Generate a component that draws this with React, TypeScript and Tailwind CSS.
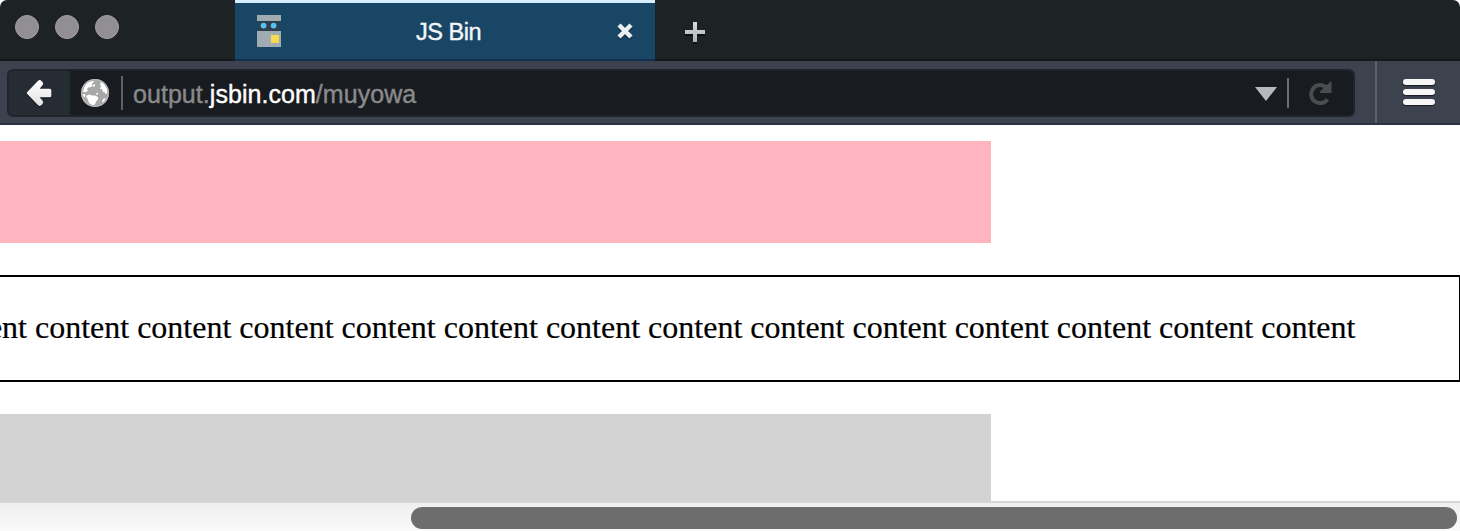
const lights = [0, 1, 2];

function RobotIcon() {
  return (
    <svg width="24" height="32" viewBox="0 0 24 32" className="shrink-0">
      <path fill="#a0abb2" d="M0 0h24v6H0zM0 16h24v16H0z" />
      <path fill="#2e3e4a" d="M2 6h20v10H2z" />
      <circle cx="6.6" cy="10.6" r="2.9" fill="#55c1f3" />
      <circle cx="16.6" cy="10.6" r="2.9" fill="#55c1f3" />
      <path fill="#f6dc4c" d="M14 20h8v8h-8z" />
    </svg>
  );
}

function TabStrip() {
  return (
    <div className="flex h-[61px] w-full bg-[#1d2225]">
      <div className="flex w-[235px] shrink-0 gap-4 border-b-2 border-[#15191c] pt-[15px] pl-[15px]">
        {lights.map((n) => (
          <span
            key={n}
            className="size-6 rounded-full border border-[#a29fa5] bg-[#918e94]"
          />
        ))}
      </div>
      <div className="flex w-[420px] shrink-0 border-t-[3px] border-b-2 border-[#15191c] border-t-[#d5effe] border-b-[#10304d] bg-[#1a4666] pt-3 pl-[22px]">
        <RobotIcon />
        <span className="ml-[135px] w-[200px] pt-px text-[23.5px] leading-8 tracking-[-0.45px] text-[#f3f6f9] [-webkit-text-stroke:0.4px]">
          JS Bin
        </span>
        <svg width="18" height="20" viewBox="0 0 18 20" className="mt-[7px] shrink-0">
          <path d="M3 5l12 12M15 5L3 17" stroke="#0b2942" strokeWidth="4.4" opacity=".6" />
          <path d="M3 3l12 12M15 3L3 15" stroke="#eceef0" strokeWidth="4.4" />
        </svg>
      </div>
      <div className="flex grow border-b-2 border-[#15191c] pt-[21px] pl-[29px]">
        <svg width="24" height="24" viewBox="0 0 24 24">
          <defs>
            <linearGradient id="plus" x1="0" y1="0" x2="0" y2="1">
              <stop stopColor="#d8dada" />
              <stop offset="1" stopColor="#b0b4b4" />
            </linearGradient>
          </defs>
          <path fill="#0e1113" d="M9 3h4v8h8v4h-8v8H9v-8H1v-4h8z" />
          <path fill="url(#plus)" d="M9 1h4v8h8v4h-8v8H9v-8H1V9h8z" />
        </svg>
      </div>
    </div>
  );
}

function Globe() {
  return (
    <svg width="28" height="28" viewBox="0 0 28 28" className="ml-[10px] shrink-0">
      <circle cx="14" cy="14" r="14" fill="#a8a8a8" />
      <path
        fill="#fff"
        d="M3 9l2-4 4-2.5 4-.5-1 2-2 1 2 1-2 2-3 .5-1 2 1 1.5-2 1-3 0zM12 6l2-1 0 2-2 1zM1.5 15l2 0 1 1.5-1 2-1-1zM5 17l3-1.5 3 1 3 0 3 1.5 0 2.5-2 2-1 3-3 .5-3-2-1-3zM20 3l3 2 3 5 .5 4-2 1-1-2-1.5 0-1-3-2 0 1-3-1-2zM15 14.5l2-1v1l-1 2zM22 20l3-1-2 3.5-2 1z"
      />
      <circle cx="14" cy="14" r="13.3" fill="none" stroke="#b8b8b8" strokeWidth="1.2" />
    </svg>
  );
}

function Toolbar() {
  return (
    <div className="flex h-16 w-full border-b-2 border-[#2c3440] bg-[#3c424e] pl-[7px]">
      <div className="mt-2 flex h-12 w-[1348px] shrink-0 items-center overflow-hidden rounded-md border-2 border-[#20252b] bg-[#181b1f]">
        <div className="flex h-full w-[62px] shrink-0 items-center border-r-2 border-[#20252b] bg-[#262c33] pl-[17px]">
          <svg width="28" height="32" viewBox="0 0 28 32">
            <defs>
              <linearGradient id="back" x1="0" y1="0" x2="0" y2="1">
                <stop stopColor="#fff" />
                <stop offset="1" stopColor="#e2e2e2" />
              </linearGradient>
              <path
                id="arrow"
                d="M1.3 17q-1-1 0-2L12.1 3.7q1.6-1.4 3.4.2l.9.9q1.6 1.8.2 3.4L13.6 11.8H23.8q1.5 0 1.5 1.5v5.4q0 1.5-1.5 1.5H13.6l3 3.6q1.4 1.6-.2 3.4l-.9.9q-1.8 1.6-3.4.2z"
              />
            </defs>
            <use href="#arrow" y="1.2" fill="#13171b" />
            <use href="#arrow" fill="url(#back)" />
          </svg>
        </div>
        <Globe />
        <span className="ml-3 h-[34px] w-0.5 shrink-0 bg-[#5d6168]" />
        <div className="ml-[10px] grow pt-px text-[25px] leading-8 tracking-[0.05px] text-[#898a8c] [-webkit-text-stroke:0.4px]">
          output.<span className="text-white">jsbin.com</span>/muyowa
        </div>
        <svg width="22" height="14" viewBox="0 0 22 14" className="mt-px shrink-0">
          <path fill="#b6babe" d="M0 0h22L11 14z" />
        </svg>
        <span className="ml-[10px] h-[30px] w-0.5 shrink-0 bg-[#6b6f74]" />
        <svg width="24" height="24" viewBox="0 0 24 24" className="mr-5 ml-5 shrink-0">
          <path d="M18.5 18.3A9 9 0 1 1 17 6.2" fill="none" stroke="#4b4c4e" strokeWidth="4" />
          <path fill="#4b4c4e" d="M22.5 0v12H11V10.500l5-5z" />
        </svg>
      </div>
      <span className="ml-5 h-[62px] w-0.5 shrink-0 bg-[#5b616b]" />
      <div className="mt-[18px] ml-[26px] flex flex-col gap-1">
        {lights.map((n) => (
          <span
            key={n}
            className="h-1.5 w-8 rounded-[3px] bg-[#f6f6f6] shadow-[0_1px_1px_#181c22]"
          />
        ))}
      </div>
    </div>
  );
}

export default function App() {
  return (
    <div className="h-[531px] w-full overflow-hidden bg-white font-['Liberation_Sans',Arial,sans-serif]">
      <div className="overflow-hidden rounded-tl-[7px] rounded-tr-[7px]">
        <TabStrip />
        <Toolbar />
      </div>
      <div className="flex h-[376px] flex-col pt-4">
        <div className="h-[102px] w-[991px] shrink-0 bg-[#ffb5c0]" />
        <div className="mt-8 flex h-[107px] w-[1461px] shrink-0 justify-end overflow-hidden border-2 border-l-0 border-black pr-[103.6px] font-['Liberation_Serif','Times_New_Roman',serif] text-[32px] leading-[100px] whitespace-nowrap text-black [-webkit-text-stroke:0.2px]">
          {Array(14).fill("content").join(" ")}
        </div>
        <div className="mt-8 w-[991px] grow bg-[#d3d3d3]" />
      </div>
      <div className="flex h-[30px] w-full border-t-2 border-[#d6d6d6] bg-linear-to-b from-[#efefef] to-[#fafafa] pt-1 pl-[411px]">
        <span className="h-[22px] w-[1046px] rounded-full bg-[#6d6d6d]" />
      </div>
    </div>
  );
}
